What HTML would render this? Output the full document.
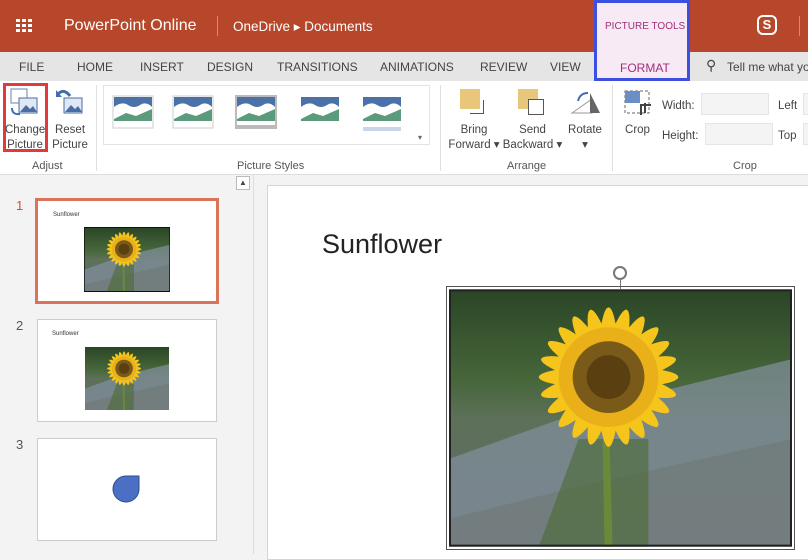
<!DOCTYPE html>
<html><head><style>
*{margin:0;padding:0;box-sizing:border-box}
body{width:808px;height:554px;overflow:hidden;font-family:"Liberation Sans",sans-serif;background:#f3f3f3;position:relative}
.a{position:absolute;white-space:nowrap}
.hdr{left:0;top:0;width:808px;height:52px;background:#b7472a;color:#fff}
.tabs{left:0;top:52px;width:808px;height:29px;background:#e5e5e5;font-size:12px;color:#444}
.tabs span{position:absolute;top:8px}
.rib{left:0;top:81px;width:808px;height:94px;background:#fff;border-bottom:1px solid #ddd}
.t{font-size:11.5px;color:#444;text-align:center;line-height:15px}
.g{font-size:11px;color:#555}
.sep{width:1px;background:#e0e0e0}
</style></head><body>
<div class="a hdr">
  <div class="a" style="left:16px;top:19px;width:16px;height:14px">
    <svg width="16" height="14"><g fill="#fff"><rect x="0" y="0" width="4" height="3"/><rect x="6" y="0" width="4" height="3"/><rect x="12" y="0" width="4" height="3"/><rect x="0" y="5" width="4" height="3"/><rect x="6" y="5" width="4" height="3"/><rect x="12" y="5" width="4" height="3"/><rect x="0" y="10" width="4" height="3"/><rect x="6" y="10" width="4" height="3"/><rect x="12" y="10" width="4" height="3"/></g></svg>
  </div>
  <div class="a" style="left:64px;top:17px;font-size:16px">PowerPoint Online</div>
  <div class="a" style="left:217px;top:16px;width:1px;height:20px;background:#d58a75"></div>
  <div class="a" style="left:233px;top:19px;font-size:13.5px">OneDrive ▸ Documents</div>
  <div class="a" style="left:757px;top:15px;width:20px;height:20px;border:2px solid #fff;border-radius:6px;font-size:13px;font-weight:bold;text-align:center;line-height:16px">S</div>
  <div class="a" style="left:799px;top:16px;width:1px;height:20px;background:#d58a75"></div>
</div>
<div class="a tabs">
  <span style="left:19px">FILE</span><span style="left:77px">HOME</span><span style="left:140px">INSERT</span><span style="left:207px">DESIGN</span><span style="left:277px">TRANSITIONS</span><span style="left:380px">ANIMATIONS</span><span style="left:480px">REVIEW</span><span style="left:550px">VIEW</span>
  <span style="left:706px;top:5px;font-size:14px">⚲</span><span style="left:727px">Tell me what yo</span>
</div>
<div class="a" style="left:594px;top:0;width:96px;height:81px;background:#f7eaf4;border:3px solid #3b4fe0">
  <div class="a" style="left:8px;top:18px;font-size:10px;color:#a0307a">PICTURE TOOLS</div>
  <div class="a" style="left:23px;top:58px;font-size:12px;color:#a0307a">FORMAT</div>
</div>
<div class="a rib">
  <div class="a" style="left:3px;top:2px;width:45px;height:69px;border:3px solid #e03a3a"></div>
  <svg class="a" style="left:9px;top:7px" width="30" height="30"><rect x="2" y="1" width="16" height="14" fill="#fff" stroke="#6a86b0"/><rect x="10" y="10" width="18" height="15" fill="#dfe8f3" stroke="#4a6da8"/><path d="M11 24l6-7 4 4 3-3 4 6z" fill="#4a6da8"/><path d="M3 20q0 7 8 6" stroke="#3f6fb0" stroke-width="2" fill="none"/></svg>
  <svg class="a" style="left:55px;top:7px" width="30" height="30"><rect x="9" y="10" width="18" height="15" fill="#dfe8f3" stroke="#4a6da8"/><path d="M10 24l6-7 4 4 3-3 4 6z" fill="#4a6da8"/><path d="M3 6q6-6 12 2" stroke="#3f6fb0" stroke-width="3" fill="none"/><path d="M1 2v7h6z" fill="#3f6fb0"/></svg>
  <div class="a t" style="left:5px;top:42px;width:40px">Change<br>Picture</div>
  <div class="a t" style="left:50px;top:42px;width:40px">Reset<br>Picture</div>
  <div class="a g" style="left:32px;top:79px">Adjust</div>
  <div class="a sep" style="left:96px;top:4px;height:86px"></div>
  <div class="a" style="left:103px;top:4px;width:327px;height:60px;border:1px solid #e3e3e3"></div>
  <svg class="a" style="left:110px;top:14px" width="310" height="40">
    <defs><g id="p"><rect width="38" height="28" fill="#4a72a8"/><path d="M0 10q8-6 14-2t12 0 12 2v18H0z" fill="#fff"/><path d="M0 22l12-6 10 3 16-7v12H0z" fill="#5b9a7c"/></g></defs>
    <rect x="3" y="1" width="40" height="32" fill="#fff" stroke="#ccc"/><use href="#p" x="4" y="2"/>
    <rect x="63" y="1" width="40" height="32" fill="#fff" stroke="#ccc"/><use href="#p" x="64" y="2"/>
    <rect x="125" y="0" width="42" height="34" fill="#bbb"/><use href="#p" x="127" y="2"/>
    <use href="#p" x="191" y="2"/><use href="#p" x="253" y="2"/><rect x="253" y="32" width="38" height="4" fill="#c9d6ea"/>
  </svg>
  <div class="a" style="left:418px;top:52px;font-size:8px;color:#666">▾</div>
  <div class="a g" style="left:237px;top:79px">Picture Styles</div>
  <div class="a sep" style="left:440px;top:4px;height:86px"></div>
  <div class="a" style="left:460px;top:8px;width:20px;height:20px;background:#e8c77a"></div>
  <div class="a" style="left:470px;top:19px;width:14px;height:14px;border-right:1px solid #555;border-bottom:1px solid #555"></div>
  <div class="a" style="left:518px;top:8px;width:20px;height:20px;background:#e8c77a"></div>
  <div class="a" style="left:528px;top:18px;width:16px;height:16px;border:1px solid #555;background:#fff"></div>
  <svg class="a" style="left:568px;top:6px" width="34" height="30"><path d="M4 26L24 12v14z" fill="#fff" stroke="#999"/><path d="M22 6l10 20H22z" fill="#666"/><path d="M10 14q2-8 10-8" stroke="#3f6fb0" stroke-width="2" fill="none"/></svg>
  <div class="a t" style="left:444px;top:42px;width:60px">Bring<br>Forward ▾</div>
  <div class="a t" style="left:500px;top:42px;width:65px">Send<br>Backward ▾</div>
  <div class="a t" style="left:564px;top:42px;width:42px">Rotate<br>▾</div>
  <div class="a g" style="left:507px;top:79px">Arrange</div>
  <div class="a sep" style="left:612px;top:4px;height:86px"></div>
  <svg class="a" style="left:623px;top:8px" width="30" height="28"><rect x="2" y="2" width="24" height="22" fill="none" stroke="#666" stroke-dasharray="3 2"/><rect x="2" y="2" width="15" height="12" fill="#6a8fc4"/><path d="M18 26v-10h10M22 14v10" stroke="#444" stroke-width="2" fill="none"/></svg>
  <div class="a t" style="left:620px;top:42px;width:35px">Crop</div>
  <div class="a t" style="left:662px;top:18px">Width:</div>
  <div class="a t" style="left:662px;top:48px">Height:</div>
  <div class="a" style="left:701px;top:12px;width:68px;height:22px;background:#f4f4f4;border:1px solid #e5e5e5"></div>
  <div class="a" style="left:705px;top:42px;width:68px;height:22px;background:#f4f4f4;border:1px solid #e5e5e5"></div>
  <div class="a t" style="left:778px;top:18px">Left</div>
  <div class="a t" style="left:778px;top:48px">Top</div>
  <div class="a" style="left:803px;top:12px;width:10px;height:22px;background:#f4f4f4;border:1px solid #e5e5e5"></div>
  <div class="a" style="left:803px;top:42px;width:10px;height:22px;background:#f4f4f4;border:1px solid #e5e5e5"></div>
  <div class="a g" style="left:733px;top:79px">Crop</div>
</div>
<svg width="0" height="0" style="position:absolute"><defs>
<linearGradient id="bg" x1="0" y1="0" x2="0" y2="1"><stop offset="0" stop-color="#2a4526"/><stop offset=".35" stop-color="#46663a"/><stop offset=".5" stop-color="#5d7058"/><stop offset="1" stop-color="#606c70"/></linearGradient>
<g id="sf"><rect width="344" height="258" fill="url(#bg)"/>
<path d="M0 170L140 120 344 70V258H0z" fill="#808e9a" opacity=".75"/>
<path d="M0 230L120 200 344 150V258H0z" fill="#6e7670" opacity=".5"/>
<path d="M90 258L130 150 200 150 200 258z" fill="#4b6b34" opacity=".6"/>
<path d="M154 150l2 108h8l-3-108z" fill="#6a8a3a"/>
<g fill="#f5c51c" transform="translate(160 88)">
<ellipse rx="70" ry="11"/><ellipse rx="70" ry="11" transform="rotate(15)"/><ellipse rx="70" ry="11" transform="rotate(30)"/><ellipse rx="70" ry="11" transform="rotate(45)"/><ellipse rx="70" ry="11" transform="rotate(60)"/><ellipse rx="70" ry="11" transform="rotate(75)"/><ellipse rx="70" ry="11" transform="rotate(90)"/><ellipse rx="70" ry="11" transform="rotate(105)"/><ellipse rx="70" ry="11" transform="rotate(120)"/><ellipse rx="70" ry="11" transform="rotate(135)"/><ellipse rx="70" ry="11" transform="rotate(150)"/><ellipse rx="70" ry="11" transform="rotate(165)"/>
<circle r="50" fill="#eab01a"/><circle r="36" fill="#7a5a18"/><circle r="22" fill="#5a4010"/></g>
</g></defs></svg>
<div class="a" style="left:236px;top:176px;width:14px;height:14px;border:1px solid #bbb;background:#fff;font-size:8px;text-align:center;line-height:12px;color:#444">▲</div>
<div class="a" style="left:253px;top:175px;width:1px;height:379px;background:#ddd"></div>
<div class="a" style="left:16px;top:198px;font-size:13px;color:#d05030">1</div>
<div class="a" style="left:16px;top:318px;font-size:13px;color:#555">2</div>
<div class="a" style="left:16px;top:437px;font-size:13px;color:#555">3</div>
<div class="a" style="left:35px;top:198px;width:184px;height:106px;border:3px solid #d9745a;background:#fff">
  <div class="a" style="left:15px;top:11px;font-size:6px;color:#333">Sunflower</div>
  <svg class="a" style="left:46px;top:26px" width="86" height="65" viewBox="0 0 344 258"><use href="#sf"/><rect width="344" height="258" fill="none" stroke="#111" stroke-width="6"/></svg>
</div>
<div class="a" style="left:37px;top:319px;width:180px;height:103px;border:1px solid #ccc;background:#fff">
  <div class="a" style="left:14px;top:11px;font-size:6px;color:#333">Sunflower</div>
  <svg class="a" style="left:47px;top:27px" width="84" height="63" viewBox="0 0 344 258"><use href="#sf"/></svg>
</div>
<div class="a" style="left:37px;top:438px;width:180px;height:103px;border:1px solid #ccc;background:#fff">
  <svg class="a" style="left:74px;top:36px" width="28" height="28"><path d="M14 1H27V14A13 13 0 1 1 14 1z" fill="#4a6fc4" stroke="#2f4f90"/></svg>
</div>
<div class="a" style="left:267px;top:185px;width:545px;height:375px;background:#fff;border:1px solid #d5d5d5"></div>
<div class="a" style="left:322px;top:229px;font-size:27px;color:#222">Sunflower</div>
<div class="a" style="left:613px;top:266px;width:14px;height:14px;border:2px solid #777;border-radius:50%"></div>
<div class="a" style="left:620px;top:280px;width:1px;height:9px;background:#777"></div>
<svg class="a" style="left:449px;top:289px" width="343" height="258" viewBox="0 0 344 258"><use href="#sf"/><rect x="1" y="1" width="342" height="256" fill="none" stroke="#222" stroke-width="2"/></svg>
<div class="a" style="left:446px;top:286px;width:349px;height:264px;border:1px solid #555"></div>
</body></html>
